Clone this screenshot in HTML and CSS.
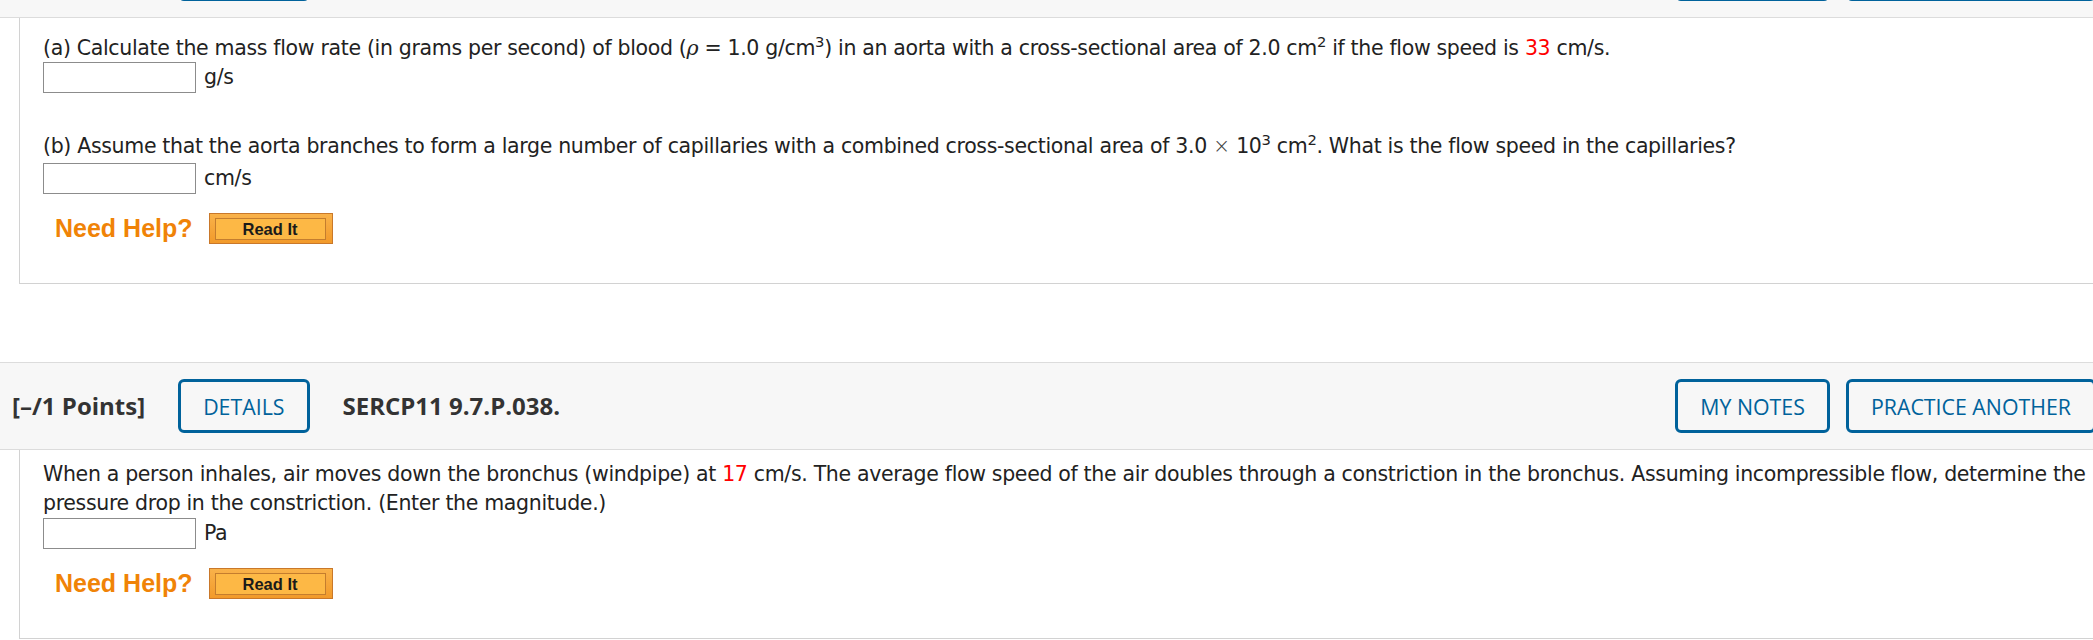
FILE: index.html
```html
<!DOCTYPE html>
<html lang="en">
<head>
<meta charset="utf-8">
<title>WebAssign questions</title>
<link rel="stylesheet" href="styles.css">
</head>
<body>
<div class="page">
  <section class="question">
    <div class="qhead">
      <span class="points">[–/1 Points]</span>
      <button class="btn">DETAILS</button>
      <span class="qid">SERCP11 9.7.P.036.</span>
      <div class="actions">
        <button class="btn">MY NOTES</button>
        <button class="btn">PRACTICE ANOTHER</button>
      </div>
    </div>
    <div class="qbody q1body">
      <p class="line line-a">(a) Calculate the mass flow rate (in grams per second) of blood (<i class="rho">ρ</i> = 1.0 g/cm<sup>3</sup>) in an aorta with a cross-sectional area of 2.0 cm<sup>2</sup> if the flow speed is <span class="red">33</span> cm/s.</p>
      <div class="answer ans-a"><input class="box" type="text"><span class="unit">g/s</span></div>
      <p class="line line-b">(b) Assume that the aorta branches to form a large number of capillaries with a combined cross-sectional area of 3.0 <span class="times">×</span> 10<sup>3</sup> cm<sup>2</sup>. What is the flow speed in the capillaries?</p>
      <div class="answer ans-b"><input class="box" type="text"><span class="unit">cm/s</span></div>
      <div class="help">
        <span class="need">Need Help?</span>
        <span class="readit"><span class="readit-inner">Read It</span></span>
      </div>
    </div>
  </section>

  <section class="question q2">
    <div class="qhead">
      <span class="points">[–/1 Points]</span>
      <button class="btn">DETAILS</button>
      <span class="qid">SERCP11 9.7.P.038.</span>
      <div class="actions">
        <button class="btn">MY NOTES</button>
        <button class="btn">PRACTICE ANOTHER</button>
      </div>
    </div>
    <div class="qbody q2body">
      <p class="line">When a person inhales, air moves down the bronchus (windpipe) at <span class="red">17</span> cm/s. The average flow speed of the air doubles through a constriction in the bronchus. Assuming incompressible flow, determine the pressure drop in the constriction. (Enter the magnitude.)</p>
      <div class="answer"><input class="box" type="text"><span class="unit">Pa</span></div>
      <div class="help">
        <span class="need">Need Help?</span>
        <span class="readit"><span class="readit-inner">Read It</span></span>
      </div>
    </div>
  </section>
</div>
</body>
</html>
```

FILE: styles.css
```css
html, body {
  margin: 0;
  padding: 0;
  background: #ffffff;
  overflow: hidden;
}

.page {
  width: 2108px;
  margin-top: -70px;
}

.question {
  display: block;
}

.q2 {
  margin-top: 78px;
}

.qhead {
  display: flex;
  align-items: center;
  background: #f7f7f7;
  border-top: 1px solid #dcdcdc;
  border-bottom: 1px solid #dcdcdc;
  padding: 16px 12px 16px 12px;
  font-family: "Open Sans", "Noto Sans", sans-serif;
  color: #333333;
}

.points,
.qid {
  font-weight: 700;
  font-size: 24px;
  line-height: 32px;
  white-space: nowrap;
}

.points {
  margin-right: 33px;
}

.qid {
  margin-left: 33px;
}

.btn {
  box-sizing: border-box;
  height: 54px;
  padding: 0 22px;
  border: 3px solid #00629b;
  border-radius: 6px;
  background: transparent;
  color: #00629b;
  font-family: "Open Sans", "Noto Sans", sans-serif;
  font-size: 21.33px;
  font-weight: 400;
  white-space: nowrap;
  cursor: pointer;
}

.actions {
  margin-left: auto;
  display: flex;
  gap: 16px;
}

.qbody {
  margin-left: 19px;
  border-left: 1px solid #d2d2d2;
  border-bottom: 1px solid #d2d2d2;
  padding-left: 23px;
  font-family: "DejaVu Sans", Verdana, sans-serif;
  font-size: 20.5px;
  letter-spacing: -0.33px;
  color: #222222;
}

.q1body {
  padding-top: 16px;
  padding-bottom: 39px;
}

.q2body {
  padding-top: 10px;
  padding-bottom: 39px;
}

.line {
  margin: 0;
  line-height: 29px;
}

.line-b {
  margin-top: 39px;
}

.ans-a {
  margin-top: -1px;
}

.ans-b {
  margin-top: 2px;
}

sup {
  font-size: 0.72em;
  vertical-align: 0.55em;
  line-height: 0;
}

.rho {
  font-style: italic;
  font-family: "DejaVu Serif", "Liberation Serif", serif;
}

.times {
  font-family: "DejaVu Sans", sans-serif;
  font-weight: 300;
  color: #444;
}

.red {
  color: #ff0000;
}

.answer {
  display: flex;
  align-items: center;
  height: 31px;
}

.box {
  box-sizing: border-box;
  width: 153px;
  height: 31px;
  margin: 0;
  padding: 0 4px;
  border: 1px solid #8c8c8c;
  border-radius: 0;
  background: #ffffff;
  font: inherit;
}

.unit {
  margin-left: 8px;
  line-height: 29px;
}

.help {
  display: flex;
  align-items: center;
  margin-top: 19px;
  padding-left: 12px;
  letter-spacing: normal;
}

.need {
  font-family: "Liberation Sans", Arial, sans-serif;
  font-weight: 700;
  font-size: 25px;
  color: #f08307;
  line-height: 31px;
}

.readit {
  box-sizing: border-box;
  display: flex;
  align-items: center;
  justify-content: center;
  width: 124px;
  height: 31px;
  margin-left: 16px;
  padding: 4px 6px 3px 5px;
  background: linear-gradient(#f9b24a, #f29a2a);
  border: 1px solid #c9782a;
}

.readit-inner {
  box-sizing: border-box;
  display: flex;
  align-items: center;
  justify-content: center;
  width: 100%;
  height: 100%;
  background: #fdb845;
  border: 1px solid #c47d2e;
  font-family: "Liberation Sans", Arial, sans-serif;
  font-weight: 700;
  font-size: 16.5px;
  color: #1a1a1a;
}
```
